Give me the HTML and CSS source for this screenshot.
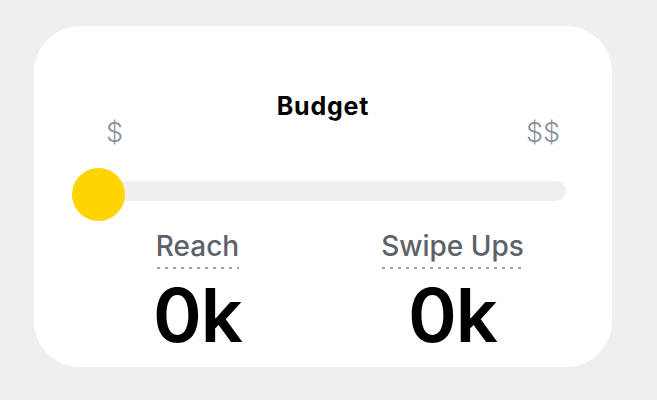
FILE: index.html
```html
<!DOCTYPE html>
<html>
<head>
<meta charset="utf-8">
<link rel="stylesheet" href="styles.css">
</head>
<body>
<div class="card">
  <div class="title">Budget</div>
  <div class="range-labels">
    <span class="cur">$</span>
    <span class="cur">$$</span>
  </div>
  <div class="slider">
    <div class="track"></div>
    <div class="thumb"></div>
  </div>
  <div class="stats">
    <div class="stat">
      <span class="label">Reach</span>
      <span class="value">0k</span>
    </div>
    <div class="stat">
      <span class="label">Swipe Ups</span>
      <span class="value">0k</span>
    </div>
  </div>
</div>
</body>
</html>
```
FILE: styles.css
```css
html, body {
  margin: 0;
  padding: 0;
}
body {
  background: #efeff0;
  width: 657px;
  height: 400px;
  overflow: hidden;
  font-family: Inter, "Noto Sans", sans-serif;
  padding-top: 26px;
  box-sizing: border-box;
}
.card {
  margin-left: 34px;
  width: 578px;
  height: 341px;
  background: #ffffff;
  border-radius: 46px;
  box-sizing: border-box;
  padding-top: 65px;
  display: flex;
  flex-direction: column;
}
.title {
  text-align: center;
  font-weight: 700;
  font-size: 25px;
  line-height: 30px;
  color: #000;
  letter-spacing: 0.8px;
}
.range-labels {
  display: flex;
  justify-content: space-between;
  padding-left: 72px;
  padding-right: 52px;
  margin-top: -3px;
}
.cur {
  font-size: 27px;
  line-height: 30px;
  font-weight: 300;
  color: #8a8f97;
}
.slider {
  position: relative;
  margin-left: 38px;
  width: 494px;
  height: 54px;
  margin-top: 20px;
}
.track {
  margin-left: 28px;
  margin-top: 13px;
  height: 20px;
  border-radius: 10px;
  background: #efeff1;
}
.thumb {
  position: absolute;
  left: 0;
  top: 0;
  width: 53px;
  height: 53px;
  border-radius: 50%;
  background: #ffd400;
}
.stats {
  display: grid;
  grid-template-columns: 1fr 1fr;
  padding: 0 32px 0 36px;
  margin-top: 7px;
}
.stat {
  display: flex;
  flex-direction: column;
  align-items: center;
}
.label {
  font-size: 28px;
  line-height: 34px;
  font-weight: 500;
  color: #5d6168;
  background-image: linear-gradient(to right, #9ea2a8 0 3px, transparent 3px 8px);
  background-size: 8px 2px;
  background-repeat: repeat-x;
  background-position: 1px bottom;
  padding-bottom: 6px;
}
.value {
  margin-top: 6px;
  font-size: 74px;
  line-height: 80px;
  font-weight: 600;
  letter-spacing: -1px;
  color: #000;
}
```
